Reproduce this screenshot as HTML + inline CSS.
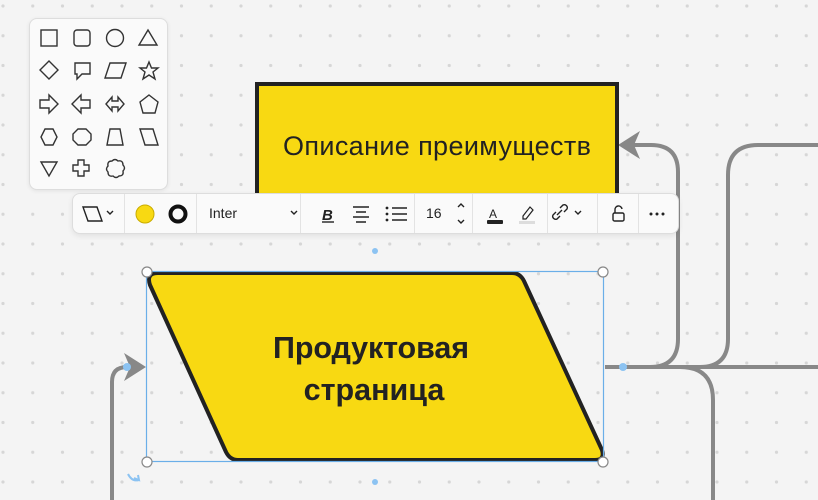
<!DOCTYPE html>
<html><head><meta charset="utf-8"><style>
body{margin:0;width:818px;height:500px;overflow:hidden;background:#f4f4f4;font-family:"Liberation Sans","DejaVu Sans",sans-serif;position:relative}
svg{position:absolute;left:0;top:0}
.panel{position:absolute;left:29px;top:18px;width:137px;height:170px;background:#fafafa;border:1px solid #ddd;border-radius:8px;box-shadow:0 1px 4px rgba(0,0,0,.08)}
.tb{position:absolute;left:72px;top:193px;width:605px;height:39px;background:#fafafa;border:1px solid #ddd;border-radius:8px;box-shadow:0 2px 6px rgba(0,0,0,.08)}
.sep{position:absolute;top:0;width:1px;height:39px;background:#e3e3e3}
.t{position:absolute;color:#222;font-size:14px}
</style></head><body>
<svg width="818" height="500">
<defs><pattern id="d" x="3" y="6" width="29.75" height="29.75" patternUnits="userSpaceOnUse"><circle cx="0" cy="0" r="1.6" fill="#d6d6d6"/><circle cx="29.75" cy="0" r="1.6" fill="#d6d6d6"/><circle cx="0" cy="29.75" r="1.6" fill="#d6d6d6"/><circle cx="29.75" cy="29.75" r="1.6" fill="#d6d6d6"/></pattern></defs>
<rect width="818" height="500" fill="url(#d)"/>
<g fill="none" stroke="#888" stroke-width="4">
<path d="M605 367 H650 Q678 367 678 339 V172 Q678 145 651 145 H628"/>
<path d="M640 367 H700 Q728 367 728 339 V175 Q728 145 758 145 H818"/>
<path d="M640 367 H818"/>
<path d="M680 367 Q713 367 713 400 V500"/>
<path d="M112 500 V382 Q112 367 127 367 H135"/>
</g>
<path d="M618 145 L640 131 L634 145 L640 159 Z" fill="#888"/>
<path d="M146 367 L124 353 L130 367 L124 381 Z" fill="#888"/>
<rect x="257" y="84" width="360" height="120" fill="#f8d912" stroke="#222" stroke-width="4"/>
<text x="437" y="155" font-size="27" text-anchor="middle" fill="#222" textLength="308" font-family="Liberation Sans, DejaVu Sans, sans-serif">Описание преимуществ</text>
<path d="M158 273 H512 Q520 273 524 281 L602 450 Q605 460 595 460 H238 Q230 460 226 452 L150 285 Q146 273 158 273 Z" fill="#f8d912" stroke="#222" stroke-width="4" stroke-linejoin="round"/>
<text x="371" y="358" font-size="30.5" font-weight="bold" text-anchor="middle" fill="#222" textLength="196" font-family="Liberation Sans, DejaVu Sans, sans-serif">Продуктовая</text>
<text x="374" y="400" font-size="30.5" font-weight="bold" text-anchor="middle" fill="#222" font-family="Liberation Sans, DejaVu Sans, sans-serif">страница</text>
<rect x="146.5" y="271.5" width="457" height="190" fill="none" stroke="#6aaee8" stroke-width="1.2"/>
<g fill="#fff" stroke="#888" stroke-width="1.2">
<circle cx="147" cy="272" r="5"/><circle cx="603" cy="272" r="5"/><circle cx="147" cy="462" r="5"/><circle cx="603" cy="462" r="5"/></g>
<g fill="#8cc3f2"><circle cx="375" cy="251" r="3"/><circle cx="375" cy="482" r="3"/><circle cx="623" cy="367" r="4"/><circle cx="127" cy="367" r="4"/></g>
<path d="M128 474 q4 8 11 6 M134 478 l5 2 -1 -5" fill="none" stroke="#8cc3f2" stroke-width="2"/>
</svg>
<div class="panel">
<svg width="137" height="170" style="left:0;top:0" fill="none" stroke="#333" stroke-width="1.4">
<rect x="11" y="11" width="16" height="16"/>
<rect x="44" y="11" width="16" height="16" rx="3"/>
<circle cx="85" cy="19" r="8.5"/>
<path d="M118 11 L127 26 H109 Z"/>
<path d="M19 42 L28 51 L19 60 L10 51 Z"/>
<path d="M45 44 H60 V55 H52 L47 60 V55 H45 Z"/>
<path d="M80 44 H96 L91 59 H75 Z"/>
<path d="M119 43 L121.5 49 H128 L123 53 L125 60 L119 56 L113 60 L115 53 L110 49 H116.5 Z"/>
<path d="M10 81 H19 V76 L28 85 L19 94 V89 H10 Z"/>
<path d="M60 81 H51 V76 L42 85 L51 94 V89 H60 Z"/>
<path d="M76 85 L82 78 V82 H88 V78 L94 85 L88 92 V88 H82 V92 Z"/>
<path d="M119 76 L128 83 L125 94 H113 L110 83 Z"/>
<path d="M15 110 H23 L27 118 L23 126 H15 L11 118 Z"/>
<path d="M48 110 H56 L61 115 V121 L56 126 H48 L43 121 V115 Z"/>
<path d="M80 110 H90 L93 126 H77 Z"/>
<path d="M110 110 H123 L128 126 H115 Z"/>
<path d="M11 143 H27 L19 157 Z"/>
<path d="M48 141 H54 V146 H59 V152 H54 V157 H48 V152 H43 V146 H48 Z"/>
<path d="M82 142 q3 -3 6 0 q5 -1 5 4 q3 3 0 6 q1 5 -4 5 q-3 3 -6 0 q-5 1 -5 -4 q-3 -3 0 -6 q-1 -5 4 -5 Z"/>
</svg></div>
<div class="tb">
<svg width="605" height="39" style="left:0;top:0" fill="none" stroke="#222" stroke-width="1.4">
<path d="M10 13 H24 L29 27 H15 Z"/><path d="M34 17 l3 3 3 -3"/>
<circle cx="72" cy="20" r="9" fill="#f8d912" stroke="#c9ac00" stroke-width="1"/>
<circle cx="105" cy="20" r="7.5" stroke="#111" stroke-width="4"/>
<path d="M218 17 l3 3 3 -3"/>
<text x="249" y="26" font-size="15" font-style="italic" font-weight="bold" fill="#222" stroke="none" font-family="Liberation Sans,sans-serif">B</text>
<path d="M249 28 H261"/>
<path d="M280 13 H296 M283 18 H293 M280 23 H296 M283 28 H293"/>
<path d="M319 14 H334 M319 20 H334 M319 26 H334" /><g fill="#222" stroke="none"><circle cx="314" cy="14" r="1.4"/><circle cx="314" cy="20" r="1.4"/><circle cx="314" cy="26" r="1.4"/></g>
<path d="M385 13 l3 -3 3 3 M385 26 l3 3 3 -3"/>
<text x="416" y="24" font-size="12" fill="#222" stroke="none" font-family="Liberation Sans,sans-serif">A</text>
<rect x="414" y="26" width="16" height="4" fill="#222" stroke="none" rx="1"/>
<path d="M450 22 l7 -9 3 3 -7 9 h-3 z" stroke-width="1.2"/><rect x="446" y="27" width="16" height="3" fill="#ddd" stroke="none"/>
<path d="M487 22 l-3 3 a3 3 0 0 1 -4 -4 l3 -3 M491 18 l3 -3 a3 3 0 0 0 -4 -4 l-3 3 M484 21 l5 -5"/><path d="M502 17 l3 3 3 -3"/>
<rect x="540" y="19" width="11" height="8" rx="1.5"/><path d="M542 19 v-3 a3.5 3.5 0 0 1 7 -1"/>
<g fill="#222" stroke="none"><circle cx="578" cy="20" r="1.5"/><circle cx="584" cy="20" r="1.5"/><circle cx="590" cy="20" r="1.5"/></g>
</svg>
<div class="sep" style="left:51px"></div><div class="sep" style="left:123px"></div><div class="sep" style="left:227px"></div><div class="sep" style="left:341px"></div><div class="sep" style="left:399px"></div><div class="sep" style="left:474px"></div><div class="sep" style="left:524px"></div><div class="sep" style="left:565px"></div>
<div class="t" style="left:136px;top:11px">Inter</div>
<div class="t" style="left:353px;top:11px">16</div>
</div>
</body></html>
